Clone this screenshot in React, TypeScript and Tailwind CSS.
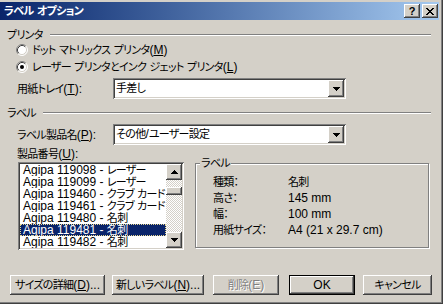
import React from 'react';

const raised =
  'shadow-[inset_-1px_-1px_#404040,inset_1px_1px_#ffffff,inset_-2px_-2px_#808080,inset_2px_2px_#d4d0c8]';
const sunken =
  'shadow-[inset_1px_1px_#808080,inset_-1px_-1px_#ffffff,inset_2px_2px_#404040,inset_-2px_-2px_#d4d0c8]';

// Japanese runs are set a little smaller and tighter so their widths come close to MS UI Gothic
const J: React.FC<{ t: string }> = ({ t }) => (
  <>
    {t.split(/([\u3000-\u30ff\u4e00-\u9fff\uff00-\uffef]+)/).map((s, i) =>
      i % 2 ? (
        <span key={i} className="text-[11px] tracking-[-0.7px]">
          {s}
        </span>
      ) : (
        s
      )
    )}
  </>
);

const Radio: React.FC<{ checked?: boolean }> = ({ checked }) => (
  <svg width="12" height="12" viewBox="0 0 12 12" className="shrink-0">
    <circle cx="6" cy="6" r="5" fill="#fff" />
    <path d="M2.11 9.89 A5.5 5.5 0 0 1 9.89 2.11" stroke="#808080" fill="none" />
    <path d="M9.89 2.11 A5.5 5.5 0 0 1 2.11 9.89" stroke="#ffffff" fill="none" />
    <path d="M2.82 9.18 A4.5 4.5 0 0 1 9.18 2.82" stroke="#404040" fill="none" />
    <path d="M9.18 2.82 A4.5 4.5 0 0 1 2.82 9.18" stroke="#d4d0c8" fill="none" />
    {checked && <circle cx="6" cy="6" r="2" fill="#000" />}
  </svg>
);

const ArrowDown = () => (
  <svg width="7" height="4" viewBox="0 0 7 4">
    <path d="M0 0h7v1H0zM1 1h5v1H1zM2 2h3v1H2zM3 3h1v1H3z" fill="#000" />
  </svg>
);

const ArrowUp = () => (
  <svg width="7" height="4" viewBox="0 0 7 4">
    <path d="M3 0h1v1H3zM2 1h3v1H2zM1 2h5v1H1zM0 3h7v1H0z" fill="#000" />
  </svg>
);

const Combo: React.FC<{ value: string }> = ({ value }) => (
  <div className={`w-[233px] h-[21px] bg-white ${sunken} p-[2px] flex`}>
    <div className="flex-1 pl-[1px] leading-[17px] whitespace-nowrap">
      <J t={value} />
    </div>
    <div className={`w-[16px] h-[17px] bg-[#d4d0c8] ${raised} flex items-center justify-center`}>
      <ArrowDown />
    </div>
  </div>
);

const GroupHeader: React.FC<{ label: string }> = ({ label }) => (
  <div className="h-[14px] flex items-center pl-[7px] pr-[8px]">
    <span className="leading-[14px] whitespace-nowrap">
      <J t={label} />
    </span>
    <div className="ml-[7px] flex-1 border-t border-t-[#808080] border-b border-b-white" />
  </div>
);

const Mn: React.FC<{ k: string }> = ({ k }) => (
  <>
    (<span className="underline">{k}</span>)
  </>
);

const items = [
  'Agipa 119098 - レーザー',
  'Agipa 119099 - レーザー',
  'Agipa 119460 - クラブ カード',
  'Agipa 119461 - クラブ カード',
  'Agipa 119480 - 名刺',
  'Agipa 119481 - 名刺',
  'Agipa 119482 - 名刺',
];

const details: [string, string][] = [
  ['種類：', '名刺'],
  ['高さ：', '145 mm'],
  ['幅：', '100 mm'],
  ['用紙サイズ：', 'A4 (21 x 29.7 cm)'],
];

const Btn: React.FC<{ w: string; children: React.ReactNode; disabled?: boolean; def?: boolean }> = ({
  w,
  children,
  disabled,
  def,
}) => (
  <div className={`${w} h-[20px] bg-[#d4d0c8] whitespace-nowrap leading-[16px] ${def ? 'border border-black' : ''}`}>
    <div className={`w-full h-full flex items-center justify-center ${raised}`}>
      <span className={disabled ? 'text-[#808080] [text-shadow:1px_1px_#ffffff]' : ''}>{children}</span>
    </div>
  </div>
);

export default function App() {
  return (
    <div
      className={`w-[443px] h-[304px] bg-[#d4d0c8] overflow-hidden pt-[2px] pr-[4px] text-[12px] text-black font-['Liberation_Sans','Noto_Sans_CJK_JP',sans-serif] [font-feature-settings:'palt'] shadow-[inset_-1px_-1px_#404040,inset_-2px_-2px_#808080]`}
    >
      {/* title bar */}
      <div className="h-[18px] flex items-center pl-[4px] pr-[1px] bg-gradient-to-r from-[#0a246a] to-[#a6caf0]">
        <span className="flex-1 text-white font-bold leading-[18px] whitespace-nowrap">
          <J t="ラベル オプション" />
        </span>
        <div className="flex gap-[2px]">
          <div className={`w-[16px] h-[14px] bg-[#d4d0c8] ${raised} flex items-center justify-center`}>
            <span className="font-bold text-[11px] leading-[12px]">?</span>
          </div>
          <div className={`w-[16px] h-[14px] bg-[#d4d0c8] ${raised} flex items-center justify-center`}>
            <svg width="8" height="7" viewBox="0 0 8 7">
              <path
                d="M0 0h2v1H0zM6 0h2v1H6zM1 1h2v1H1zM5 1h2v1H5zM2 2h4v1H2zM3 3h2v1H3zM2 4h4v1H2zM1 5h2v1H1zM5 5h2v1H5zM0 6h2v1H0zM6 6h2v1H6z"
                fill="#000"
              />
            </svg>
          </div>
        </div>
      </div>

      {/* printer group */}
      <div className="mt-[8px]">
        <GroupHeader label="プリンタ" />
      </div>
      <div className="mt-[1px] h-[14px] flex items-center pl-[16px]">
        <Radio />
        <span className="ml-[4px] leading-[14px] whitespace-nowrap">
          <J t="ドット マトリックス プリンタ" />
          <Mn k="M" />
        </span>
      </div>
      <div className="mt-[3px] h-[14px] flex items-center pl-[16px]">
        <Radio checked />
        <span className="ml-[4px] leading-[14px] whitespace-nowrap">
          <J t="レーザー プリンタとインク ジェット プリンタ" />
          <Mn k="L" />
        </span>
      </div>
      <div className="mt-[4px] h-[21px] flex items-center pl-[17px]">
        <span className="w-[96px] whitespace-nowrap">
          <J t="用紙トレイ" />
          <Mn k="T" />:
        </span>
        <Combo value="手差し" />
      </div>

      {/* label group */}
      <div className="mt-[7px]">
        <GroupHeader label="ラベル" />
      </div>
      <div className="mt-[4px] h-[21px] flex items-center pl-[17px]">
        <span className="w-[96px] whitespace-nowrap">
          <J t="ラベル製品名" />
          <Mn k="P" />:
        </span>
        <Combo value="その他/ユーザー設定" />
      </div>
      <div className="mt-[2px] h-[14px] flex items-center pl-[17px]">
        <span className="leading-[14px] whitespace-nowrap">
          <J t="製品番号" />
          <Mn k="U" />:
        </span>
      </div>

      <div className="mt-[1px] h-[88px] flex">
        {/* list box */}
        <div className={`ml-[18px] w-[166px] h-[88px] bg-white ${sunken} p-[2px] flex`}>
          <div className="flex-1 flex flex-col overflow-hidden">
            {items.map((it, i) => (
              <div
                key={it}
                className={`h-[12px] leading-[12px] pl-[3px] whitespace-nowrap overflow-hidden ${
                  i === 5
                    ? 'bg-[#0a246a] text-white outline outline-1 outline-dotted outline-[#e8d890] -outline-offset-1'
                    : ''
                }`}
              >
                <J t={it} />
              </div>
            ))}
          </div>
          <div className="w-[16px] flex flex-col">
            <div className={`h-[16px] bg-[#d4d0c8] ${raised} flex items-center justify-center`}>
              <ArrowUp />
            </div>
            <div className="flex-1 bg-[repeating-conic-gradient(#ffffff_0_25%,#d4d0c8_0_50%)] bg-[length:2px_2px]">
              <div className={`mt-[7px] h-[8px] bg-[#d4d0c8] ${raised}`} />
            </div>
            <div className={`h-[16px] bg-[#d4d0c8] ${raised} flex items-center justify-center`}>
              <ArrowDown />
            </div>
          </div>
        </div>

        {/* label details group box */}
        <div className="ml-[11px] mt-[1px] w-[234px] h-[85px] relative border border-[#808080] shadow-[inset_1px_1px_#ffffff,1px_1px_#ffffff] pt-[10px] pl-[17px]">
          <span className="absolute -top-[8px] left-[4px] px-[1px] bg-[#d4d0c8] leading-[14px]">
            <J t="ラベル" />
          </span>
          {details.map(([k, v]) => (
            <div key={k} className="h-[16px] flex items-center whitespace-nowrap">
              <span className="w-[75px]">
                <J t={k} />
              </span>
              <span>
                <J t={v} />
              </span>
            </div>
          ))}
        </div>
      </div>

      {/* buttons */}
      <div className="mt-[25px] flex pl-[10px]">
        <Btn w="w-[95px]">
          <J t="サイズの詳細" />
          <Mn k="D" />
          ...
        </Btn>
        <div className="ml-[7px]">
          <Btn w="w-[92px]">
            <J t="新しいラベル" />
            <Mn k="N" />
            ...
          </Btn>
        </div>
        <div className="ml-[9px]">
          <Btn w="w-[66px]" disabled>
            <J t="削除" />
            (E)
          </Btn>
        </div>
        <div className="ml-[10px]">
          <Btn w="w-[66px]" def>
            OK
          </Btn>
        </div>
        <div className="ml-[8px]">
          <Btn w="w-[69px]">
            <J t="キャンセル" />
          </Btn>
        </div>
      </div>
    </div>
  );
}
